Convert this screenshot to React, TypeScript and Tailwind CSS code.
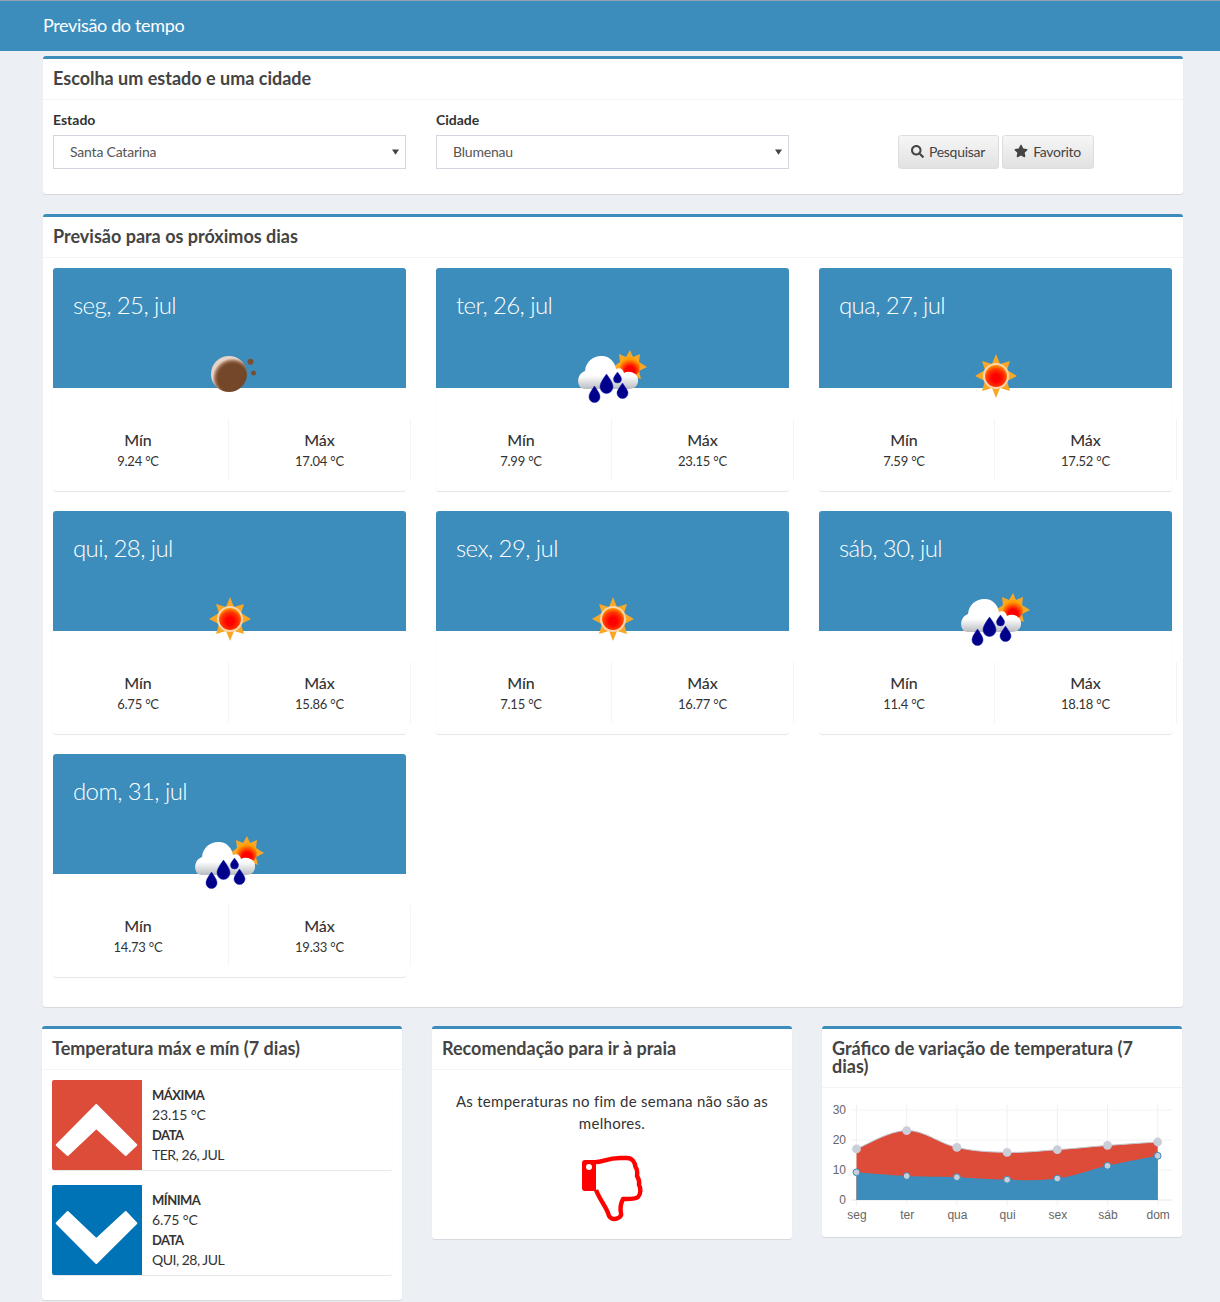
import { FaSearch, FaStar } from 'react-icons/fa';

type Kind = 'moon' | 'rain' | 'sun';

const days: { date: string; min: string; max: string; icon: Kind }[] = [
  { date: 'seg, 25, jul', min: '9.24', max: '17.04', icon: 'moon' },
  { date: 'ter, 26, jul', min: '7.99', max: '23.15', icon: 'rain' },
  { date: 'qua, 27, jul', min: '7.59', max: '17.52', icon: 'sun' },
  { date: 'qui, 28, jul', min: '6.75', max: '15.86', icon: 'sun' },
  { date: 'sex, 29, jul', min: '7.15', max: '16.77', icon: 'sun' },
  { date: 'sáb, 30, jul', min: '11.4', max: '18.18', icon: 'rain' },
  { date: 'dom, 31, jul', min: '14.73', max: '19.33', icon: 'rain' },
];

const labels = ['seg', 'ter', 'qua', 'qui', 'sex', 'sáb', 'dom'];

function WeatherIcon({ kind, id }: { kind: Kind; id: string }) {
  if (kind === 'moon') {
    return (
      <svg viewBox="0 0 80 64" className="w-20 h-16 blur-[0.4px]">
        <defs>
          <radialGradient id={id} cx="0.6" cy="0.62" r="0.56">
            <stop offset="0.72" stopColor="#754729" />
            <stop offset="0.85" stopColor="#9a6c50" />
            <stop offset="1" stopColor="#e8d4c6" />
          </radialGradient>
        </defs>
        <circle cx="39" cy="31" r="18" fill={`url(#${id})`} />
        <circle cx="60.5" cy="18.7" r="3" fill="#7a4f35" />
        <circle cx="63.5" cy="30" r="2.5" fill="#7a4f35" />
      </svg>
    );
  }
  if (kind === 'sun') {
    return (
      <svg viewBox="0 0 80 64" className="w-20 h-16 blur-[0.4px]">
        <defs>
          <radialGradient id={id} cx="0.5" cy="0.6" r="0.6">
            <stop offset="0.3" stopColor="#ff0000" />
            <stop offset="0.7" stopColor="#ff3a00" />
            <stop offset="1" stopColor="#ffa000" />
          </radialGradient>
        </defs>
        <path
          d="M40 11 L44 21 L54 18 L51 27 L61 33 L51 38 L54 48 L44 45 L40 55 L36 45 L26 48 L29 38 L19 33 L29 27 L26 18 L36 21 Z"
          fill="#f9a825"
        />
        <circle cx="40" cy="33" r="13" fill="#fbd6b0" />
        <circle cx="40" cy="33" r="11" fill={`url(#${id})`} />
      </svg>
    );
  }
  return (
    <svg viewBox="0 0 80 64" className="w-20 h-16 blur-[0.4px]">
      <defs>
        <radialGradient id={id} cx="0.5" cy="0.7" r="0.6">
          <stop offset="0.4" stopColor="#ff0000" />
          <stop offset="1" stopColor="#ffa000" />
        </radialGradient>
        <linearGradient id={`${id}c`} x1="0" y1="0" x2="0" y2="1">
          <stop offset="0.6" stopColor="#ffffff" />
          <stop offset="1" stopColor="#b9bcc0" />
        </linearGradient>
      </defs>
      <path
        d="M57 7 L60 14 L67 11 L66 19 L74 24 L66 28 L68 36 L60 33 L57 40 L53 33 L46 36 L47 28 L40 24 L47 19 L46 11 L53 14 Z"
        fill="#f9a825"
      />
      <circle cx="57" cy="24" r="10" fill={`url(#${id})`} />
      <path
        d="M11 46 C3 45 3 31 12 28 C13 17 22 12 30 13 C38 14 42 20 43 26 C47 24 50 26 51 30 C56 27 66 30 65 38 C65 43 61 46 56 46 Z"
        fill={`url(#${id}c)`}
      />
      <g fill="#00008b" stroke="#1020b0" strokeWidth="0.5">
        <path d="M21.5 43 C25 48 27 51 27 54 A5.5 5.5 0 0 1 16 54 C16 51 18 48 21.5 43 Z" />
        <path d="M33.5 31 C37 36 40 40 40 44 A6.5 6.5 0 0 1 27 44 C27 40 30 36 33.5 31 Z" />
        <path d="M44.5 29 C46 31 48.5 34 48.5 36 A4 4 0 0 1 40.5 36 C40.5 34 43 31 44.5 29 Z" />
        <path d="M49.5 40 C52 44 55 47 55 50 A5.5 5.5 0 0 1 44 50 C44 47 47 44 49.5 40 Z" />
      </g>
    </svg>
  );
}

function Panel({ title, className, children }: { title: string; className?: string; children: React.ReactNode }) {
  return (
    <section className={`bg-white rounded-[3px] border-t-[3px] border-[#3c8dbc] shadow-[0_1px_1px_rgba(0,0,0,0.1)] ${className ?? ''}`}>
      <h3 className="px-[10px] pt-[10px] pb-[12px] text-[18px] leading-[18px] font-bold text-[#444] border-b border-[#f4f4f4]">{title}</h3>
      {children}
    </section>
  );
}

function SelectField({ label, value }: { label: string; value: string }) {
  return (
    <div>
      <label className="block text-[14px] leading-[20px] font-bold text-[#333] mb-[5px]">{label}</label>
      <div className="relative">
        <select
          defaultValue={value}
          className="block w-full h-[34px] pl-[16px] pr-8 pb-[2px] border border-[#d2d6de] bg-white text-[14px] tracking-[-0.2px] text-[#555] appearance-none rounded-none outline-none"
        >
          <option>{value}</option>
        </select>
        <svg viewBox="0 0 8 6" className="absolute right-[7px] top-[14px] w-[7px] h-[6px] pointer-events-none">
          <path d="M0 0 H8 L4 6 Z" fill="#444" />
        </svg>
      </div>
    </div>
  );
}

function DayCard({ day, index }: { day: (typeof days)[number]; index: number }) {
  return (
    <div className="bg-white rounded-[3px] shadow-[0_1px_1px_rgba(0,0,0,0.1)]">
      <div className="relative h-[120px] bg-[#3c8dbc] rounded-t-[3px] px-5 pt-[20px]">
        <h4 className="text-[24px] leading-[34px] tracking-[-0.6px] font-light text-white">{day.date}</h4>
        <div className="absolute left-1/2 -translate-x-1/2 top-[75px]">
          <WeatherIcon kind={day.icon} id={`wx${index}`} />
        </div>
      </div>
      <div className="pt-[31px] pb-[11px]">
        <div className="grid grid-cols-[181px_182px] -mx-[5px] w-[363px] text-center">
          <div className="border-r border-[#f4f4f4] h-[61px] pt-[12px]">
            <div className="text-[16px] leading-[18px] font-medium text-[#333] mb-[3px]">Mín</div>
            <div className="text-[13px] leading-[18px] tracking-[-0.2px] text-[#333]">{day.min} °C</div>
          </div>
          <div className="border-r border-[#f4f4f4] h-[61px] pt-[12px]">
            <div className="text-[16px] leading-[18px] font-medium text-[#333] mb-[3px]">Máx</div>
            <div className="text-[13px] leading-[18px] tracking-[-0.2px] text-[#333]">{day.max} °C</div>
          </div>
        </div>
      </div>
    </div>
  );
}

function InfoBox({ color, up, rows }: { color: string; up: boolean; rows: string[] }) {
  return (
    <div className="flex h-[90px] bg-white rounded-[2px] shadow-[0_1px_1px_rgba(0,0,0,0.1)]">
      <div className={`w-[90px] h-[90px] rounded-l-[2px] ${color}`}>
        <svg viewBox="0 0 90 90" className="w-[90px] h-[90px]">
          <path
            d={up ? 'M44.3 25 L84.3 65 L73.7 75 L44.3 48 L15.7 75 L4.7 65 Z' : 'M44.3 78 L84.3 38.3 L73.7 27 L44.3 54.3 L15.7 27 L4.7 38.3 Z'}
            fill="#fff"
            stroke="#fff"
            strokeWidth="2"
            strokeLinejoin="round"
          />
        </svg>
      </div>
      <div className="pl-[10px] pt-[5px] text-[14px] leading-[20px] text-[#333]">
        <div className="font-bold text-[13px] tracking-[-0.5px]">{rows[0]}</div>
        <div className="tracking-[-0.1px]">{rows[1]}</div>
        <div className="font-bold text-[13px] tracking-[-0.5px]">DATA</div>
        <div className="tracking-[-0.5px]">{rows[2]}</div>
      </div>
    </div>
  );
}

// same smoothing as the line chart: control points from the neighbours
function smooth(points: number[][]) {
  let d = `M${points[0][0]} ${points[0][1]}`;
  for (let i = 0; i < points.length - 1; i++) {
    const p0 = points[i - 1] ?? points[i];
    const p1 = points[i];
    const p2 = points[i + 1];
    const p3 = points[i + 2] ?? p2;
    const t = 0.18;
    d += ` C${p1[0] + (p2[0] - p0[0]) * t} ${p1[1] + (p2[1] - p0[1]) * t} ${p2[0] - (p3[0] - p1[0]) * t} ${p2[1] - (p3[1] - p1[1]) * t} ${p2[0]} ${p2[1]}`;
  }
  return d;
}

function TempChart() {
  const xs = labels.map((_, i) => 24.5 + i * 50.2);
  const yOf = (v: number) => 102 - v * 3;
  const maxPts = days.map((d, i) => [xs[i], yOf(parseFloat(d.max))]);
  const minPts = days.map((d, i) => [xs[i], yOf(parseFloat(d.min))]);
  const close = `L${xs[6]} 102 L${xs[0]} 102 Z`;
  return (
    <svg width="340" height="129" viewBox="0 0 340 129" className="block" fontFamily="'Liberation Sans', sans-serif" fontSize="12" fill="#666">
      {[12, 42, 72].map((y) => (
        <line key={y} x1="19" x2="340" y1={y} y2={y} stroke="#f2f2f2" />
      ))}
      <line x1="19" x2="340" y1="102" y2="102" stroke="#e6e6e6" />
      {xs.map((x) => (
        <line key={x} x1={x} x2={x} y1="7" y2="107" stroke="#f0f0f0" />
      ))}
      {[30, 20, 10, 0].map((v) => (
        <text key={v} x="14" y={yOf(v) + 4} textAnchor="end">
          {v}
        </text>
      ))}
      {labels.map((l, i) => (
        <text key={l} x={xs[i] + 0.5} y="121" textAnchor="middle">
          {l}
        </text>
      ))}
      <path d={`${smooth(maxPts)} ${close}`} fill="#dd4b39" />
      <path d={smooth(maxPts)} fill="none" stroke="#c1c7d1" strokeWidth="1" />
      <path d={`${smooth(minPts)} ${close}`} fill="#3c8dbc" />
      {maxPts.map(([x, y]) => (
        <circle key={x} cx={x} cy={y} r="4.4" fill="#c9ced8" />
      ))}
      {minPts.map(([x, y]) => (
        <circle key={x} cx={x} cy={y} r="3.4" fill="#c9ced8" stroke="#3b8bba" strokeWidth="1" />
      ))}
    </svg>
  );
}

export default function App() {
  return (
    <div className="min-h-[1302px] bg-[#ecf0f5] [font-family:Lato,sans-serif] text-[#333]">
      <header className="h-[51px] bg-[#3c8dbc] border-t border-[#93a3ad] pl-[43px] pb-[2px] flex items-center">
        <span className="text-[18px] tracking-[-0.35px] text-white">Previsão do tempo</span>
      </header>

      <main className="w-[1140px] ml-[43px] pt-[5px] pb-[2px]">
        <Panel title="Escolha um estado e uma cidade" className="mb-5">
          <div className="p-[10px] pb-[25px] grid grid-cols-[353px_353px_353px] gap-[30px]">
            <SelectField label="Estado" value="Santa Catarina" />
            <SelectField label="Cidade" value="Blumenau" />
            <div className="flex justify-center items-end gap-[3px]">
              {[
                { text: 'Pesquisar', width: 'w-[101px]', icon: <FaSearch className="text-[13px]" /> },
                { text: 'Favorito', width: 'w-[92px]', icon: <FaStar className="text-[14px]" /> },
              ].map((b) => (
                <button
                  key={b.text}
                  className={`${b.width} h-[34px] pb-[2px] flex items-center justify-center gap-[5px] border border-[#ddd] rounded-[3px] bg-gradient-to-b from-[#f6f6f6] to-[#e2e2e2] text-[14px] tracking-[-0.3px] text-[#444]`}
                >
                  {b.icon}
                  {b.text}
                </button>
              ))}
            </div>
          </div>
        </Panel>

        <Panel title="Previsão para os próximos dias" className="mb-[19px]">
          <div className="p-[10px] grid grid-cols-[353px_353px_353px] gap-x-[30px] gap-y-5">
            {days.map((d, i) => (
              <DayCard key={d.date} day={d} index={i} />
            ))}
            <div className="col-span-3 h-0" />
          </div>
        </Panel>

        <div className="-ml-px w-[1140px] grid grid-cols-3 gap-[30px] items-start">
          <Panel title="Temperatura máx e mín (7 dias)">
            <div className="p-[10px] pb-[25px] flex flex-col gap-[15px]">
              <InfoBox color="bg-[#dd4b39]" up rows={['MÁXIMA', '23.15 °C', 'TER, 26, JUL']} />
              <InfoBox color="bg-[#0073b7]" up={false} rows={['MÍNIMA', '6.75 °C', 'QUI, 28, JUL']} />
            </div>
          </Panel>

          <Panel title="Recomendação para ir à praia">
            <div className="pt-[20px] px-[10px] pb-[12px] text-center">
              <p className="text-[15px] leading-[22px] tracking-[0.28px] text-[#333] w-[330px] mx-auto">As temperaturas no fim de semana não são as melhores.</p>
              <svg viewBox="0 0 80 80" className="w-20 h-20 ml-[128px] mt-[13px]">
                <path
                  fillRule="evenodd"
                  d="M15 13 H26 V44 H15 A3 3 0 0 1 12 41 V16 A3 3 0 0 1 15 13 Z M19 17 A3 3 0 1 0 19.01 23 A3 3 0 1 0 19 17 Z"
                  fill="#ff0000"
                />
                <path
                  d="M26 15 C32 15 38 11 50 11 L57 11 C62 11 65 15 65.5 20 C67 22 67.5 26 67 29 C69 32 69.5 35 69 38 C71 41 71 47 68 50 C66 52 62 52 56 52 L53 52 C50 58 50 62 51 66 C52 70 47 72 44 72 C41 72 39 70 38 66 C36 60 30 53 26 43"
                  fill="none"
                  stroke="#ff0000"
                  strokeWidth="4.4"
                  strokeLinejoin="round"
                />
              </svg>
            </div>
          </Panel>

          <Panel title="Gráfico de variação de temperatura (7 dias)">
            <div className="p-[10px]">
              <TempChart />
            </div>
          </Panel>
        </div>
      </main>
    </div>
  );
}
